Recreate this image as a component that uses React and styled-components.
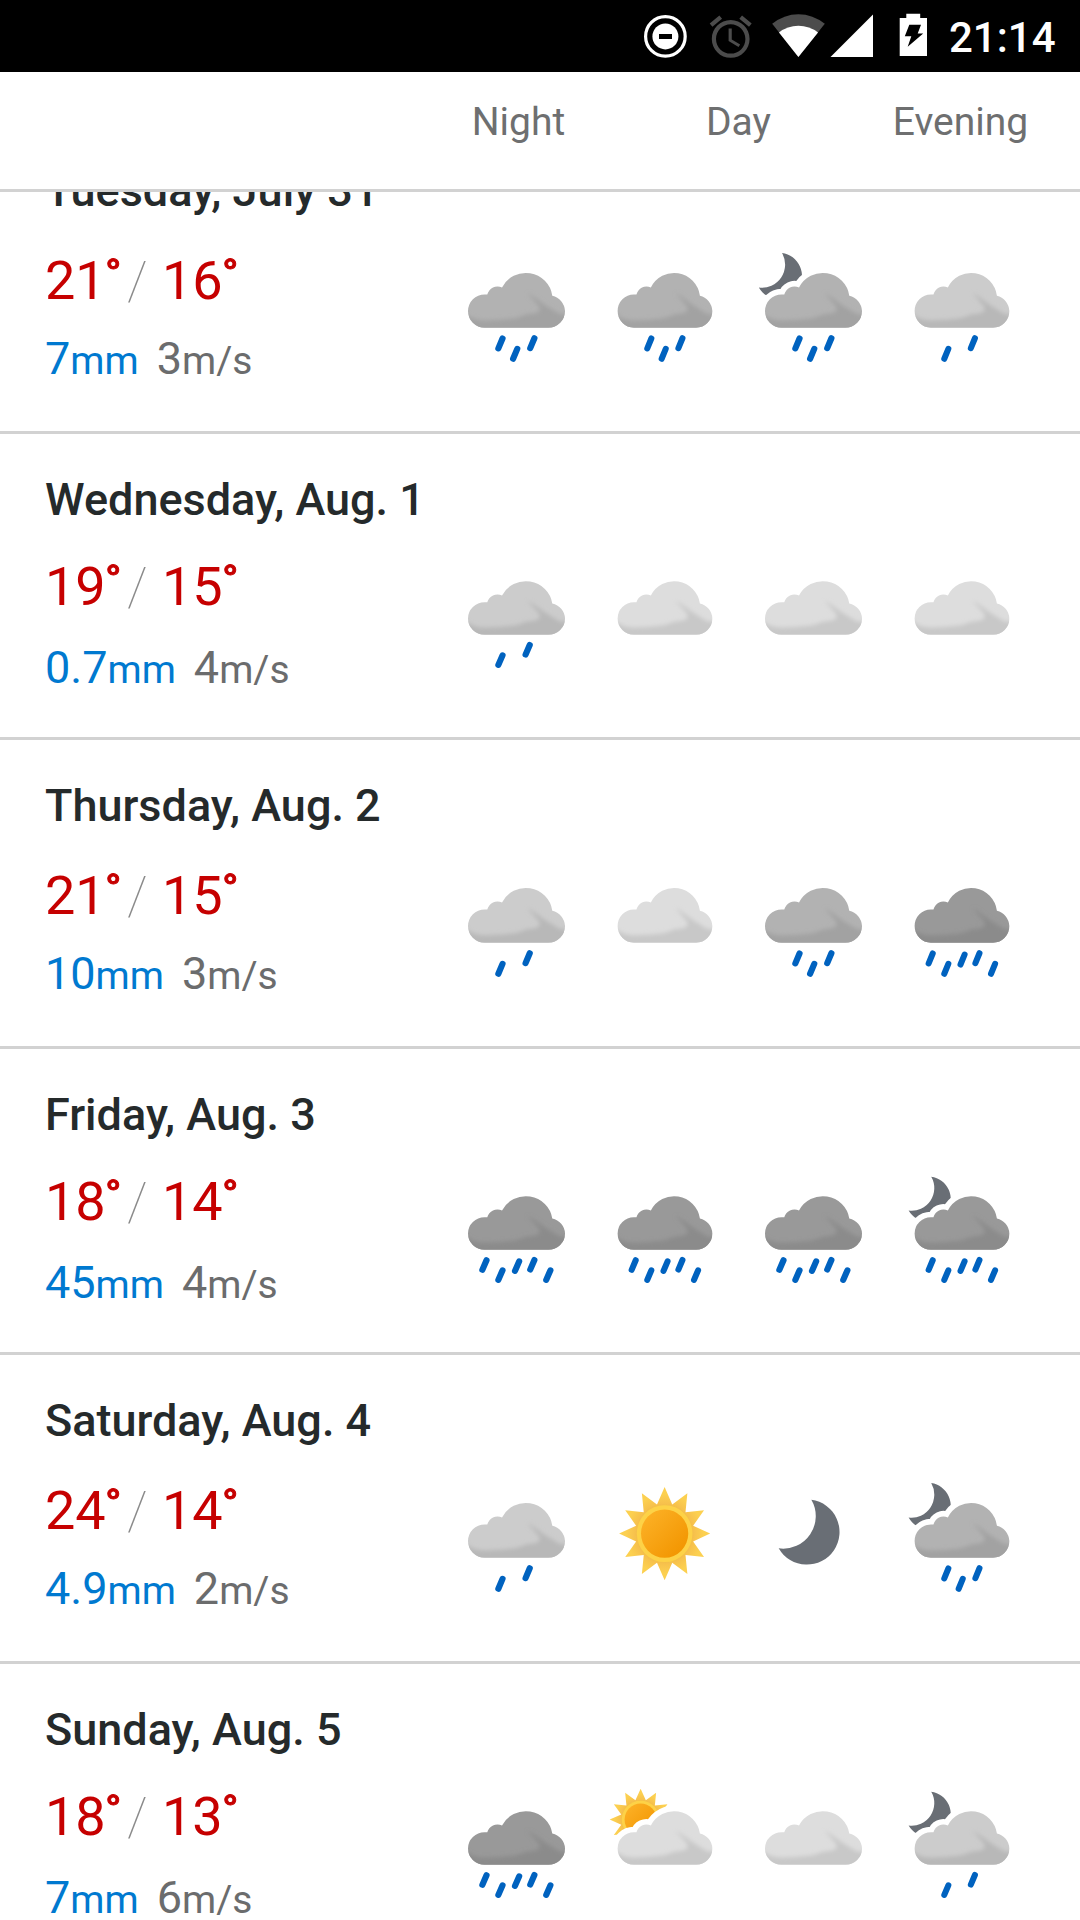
import React from 'react';
import styled, { createGlobalStyle } from 'styled-components';

const GlobalStyle = createGlobalStyle`
  html, body { margin: 0; padding: 0; background: #fff; }
  * { box-sizing: border-box; }
`;

const Screen = styled.div`
  display: flex;
  flex-direction: column;
  width: 1080px;
  height: 1920px;
  overflow: hidden;
  background: #fff;
  font-family: Roboto, "Liberation Sans", sans-serif;
`;

const StatusBar = styled.div`
  display: flex;
  align-items: center;
  flex: none;
  height: 72px;
  padding-left: 643px;
  background: #000;
`;

const StatusIcon = styled.svg`
  flex: none;
  display: block;
  width: ${(p) => p.$width}px;
  height: 72px;
  margin-right: ${(p) => p.$gap}px;
`;

const Clock = styled.span`
  color: #fff;
  font-size: 42px;
  font-weight: 500;
  line-height: 48px;
  padding-top: 4px;
`;

const PeriodHeader = styled.div`
  display: grid;
  grid-template-columns: 149px 291px 153px;
  flex: none;
  height: 120px;
  padding: 25px 0 0 444px;
  border-bottom: 3px solid #d2d2d2;
`;

const Period = styled.span`
  color: #6e6f70;
  font-size: 39px;
  line-height: 50px;
  text-align: center;
`;

const DayList = styled.div`
  flex: 1;
  min-height: 0;
  overflow: hidden;
`;

const DayRow = styled.div`
  display: flex;
  height: ${(p) => (p.$tall ? 309 : 306)}px;
  padding-left: 45px;
  border-bottom: 3px solid #d2d2d2;

  &:first-child {
    margin-top: -67px;
  }
`;

const DayInfo = styled.div`
  width: 408px;
  padding-top: 39px;
`;

const DayTitle = styled.div`
  color: #252a2b;
  font-size: 45px;
  font-weight: 500;
  line-height: 54px;
  white-space: nowrap;
`;

const Temperatures = styled.div`
  display: flex;
  margin: ${(p) => (p.$tall ? '33px 0 21px' : '30px 0 24px')};
  color: #c60000;
  font-size: 54px;
  line-height: 60px;
`;

const Temperature = styled.span`
  display: flex;
  width: 80px;
`;

const Degree = styled.span`
  margin-left: -1px;
  font-size: 51px;
  font-weight: 700;
  -webkit-text-stroke: 1px #c60000;
`;

const Slash = styled.span`
  width: 37px;
  padding-left: 3px;
  color: #8a8a8a;
  font-weight: 100;
  margin-left: -1px;
  margin-right: 1px;
`;

const Measures = styled.div`
  display: flex;
  gap: 18px;
  font-size: 45px;
  line-height: 54px;
`;

const Measure = styled.span`
  color: ${(p) => (p.$rain ? '#0079d0' : '#6b6c6d')};
`;

const Unit = styled.span`
  font-size: 39px;
`;

const Symbols = styled.div`
  display: grid;
  grid-template-columns: 126px 123px 126px 123px;
  grid-template-rows: ${(p) => (p.$tall ? 126 : 123)}px;
  column-gap: 24px;
  margin-top: 117px;
`;

const SymbolArt = styled.svg`
  display: block;
  width: 100%;
  height: 100%;
  overflow: visible;
`;

const CLOUD =
  'M25.1 68A13.2 13.2 0 0 1 25.1 41.6L27.2 41.7A8.3 8.3 0 0 1 38.9 36.2A21.2 21.2 0 0 1 78.8 42.6A13.2 13.2 0 0 1 88.9 54.8A13.2 13.2 0 0 1 75.7 68Z';
const SHADE =
  'M8 55C13.5 61 20 62.4 28 62.2C34 62 39 61.8 44 61C51 61 54 58.8 58.5 57.4C64 56.8 68.5 56.5 69 53.2C68.5 50 65.5 48.4 64 46C62.5 44 60.5 43 59.5 40.5C62.5 42.5 66 44.8 68.5 46.6C72 49.6 77 52.4 80.5 54.6C84 57 87 58.5 92 57L92 73L8 73Z';

const TONES = {
  heavy: ['#999999', '#8b8b8b'],
  medium: ['#b2b2b2', '#a2a2a2'],
  light: ['#cccccc', '#b8b8b8'],
  pale: ['#dddddd', '#c8c8c8'],
};

const DROPS = {
  heavy: [
    [23.3, 84.4], [36, 92.6], [49.2, 85.3], [61.3, 84.2], [74, 92.6],
  ],
  medium: [
    [36, 84.4], [47.7, 92.6], [61.3, 84.2],
  ],
  light: [
    [36, 92.6], [57.6, 84.2],
  ],
  pale: [],
};

const sunRays = Array.from({ length: 24 }, (_, i) => {
  const angle = (i * Math.PI) / 12;
  const radius = i % 2 ? 24 : 37;
  return `${(Math.sin(angle) * radius).toFixed(2)},${(-Math.cos(angle) * radius).toFixed(2)}`;
}).join(' ');

function Sun({ transform }) {
  return (
    <g transform={transform}>
      <polygon points={sunRays} fill="url(#rays)" />
      <circle r="23.4" fill="#f3c04a" opacity="0.6" />
      <circle r="22.6" fill="#fdd247" />
      <circle r="19.2" fill="url(#core)" />
    </g>
  );
}

function Moon({ transform }) {
  return (
    <path
      transform={transform}
      fill="#696e75"
      d="M48.7 21.95A25.9 25.9 0 1 1 22.75 60.6A25.9 25.9 0 0 0 48.7 21.95Z"
    />
  );
}

function Cloud({ tone }) {
  const [base, shade] = TONES[tone];
  return (
    <g>
      <path d={CLOUD} fill={base} />
      <g clipPath="url(#cloudClip)">
        <path d={SHADE} fill={shade} filter="url(#soften)" />
      </g>
      {DROPS[tone].map(([x, y]) => (
        <path
          key={x}
          d={`M${x} ${y}l3.3 -7.8`}
          stroke="#0062bf"
          strokeWidth="4.9"
          strokeLinecap="round"
        />
      ))}
    </g>
  );
}

function WeatherSymbol({ kind }) {
  const [sky, tone] = kind.split('-');
  return (
    <SymbolArt viewBox="0 0 100 100" preserveAspectRatio="none">
      {sky === 'sun' && (
        <Sun transform={tone ? 'translate(30.6 31.4) scale(0.68)' : 'translate(50.1 48.9)'} />
      )}
      {sky === 'moon' && (
        <Moon transform={tone ? 'translate(-9.13 -6.86) scale(0.709)' : undefined} />
      )}
      {tone && sky !== 'cloud' && <path d={CLOUD} fill="#fff" stroke="#fff" strokeWidth="9" />}
      {tone && <Cloud tone={tone} />}
    </SymbolArt>
  );
}

const SharedDefs = styled.svg`
  position: absolute;
  width: 0;
  height: 0;
`;

function SymbolDefs() {
  return (
    <SharedDefs aria-hidden="true">
      <defs>
        <linearGradient id="core" x1="0" y1="0" x2="1" y2="1">
          <stop offset="0.1" stopColor="#fcb025" />
          <stop offset="0.9" stopColor="#f29500" />
        </linearGradient>
        <radialGradient id="rays" gradientUnits="userSpaceOnUse" cx="0" cy="0" r="37">
          <stop offset="0.62" stopColor="#f6bf4c" />
          <stop offset="0.85" stopColor="#fcd050" />
        </radialGradient>
        <clipPath id="cloudClip">
          <path d={CLOUD} />
        </clipPath>
        <filter id="soften" x="-10%" y="-30%" width="120%" height="160%">
          <feGaussianBlur stdDeviation="1.6" />
        </filter>
      </defs>
    </SharedDefs>
  );
}

const days = [
  { title: 'Tuesday, July 31', high: 21, low: 16, rain: '7', wind: 3, symbols: ['cloud-medium', 'cloud-medium', 'moon-medium', 'cloud-light'] },
  { title: 'Wednesday, Aug. 1', high: 19, low: 15, rain: '0.7', wind: 4, symbols: ['cloud-light', 'cloud-pale', 'cloud-pale', 'cloud-pale'] },
  { title: 'Thursday, Aug. 2', high: 21, low: 15, rain: '10', wind: 3, symbols: ['cloud-light', 'cloud-pale', 'cloud-medium', 'cloud-heavy'] },
  { title: 'Friday, Aug. 3', high: 18, low: 14, rain: '45', wind: 4, symbols: ['cloud-heavy', 'cloud-heavy', 'cloud-heavy', 'moon-heavy'] },
  { title: 'Saturday, Aug. 4', high: 24, low: 14, rain: '4.9', wind: 2, symbols: ['cloud-light', 'sun', 'moon', 'moon-medium'] },
  { title: 'Sunday, Aug. 5', high: 18, low: 13, rain: '7', wind: 6, symbols: ['cloud-heavy', 'sun-pale', 'cloud-pale', 'moon-light'] },
];

function Day({ day, tall }) {
  return (
    <DayRow $tall={tall}>
      <DayInfo>
        <DayTitle>{day.title}</DayTitle>
        <Temperatures $tall={tall}>
          <Temperature>{day.high}<Degree>˚</Degree></Temperature>
          <Slash>/</Slash>
          <Temperature>{day.low}<Degree>˚</Degree></Temperature>
        </Temperatures>
        <Measures>
          <Measure $rain>{day.rain}<Unit>mm</Unit></Measure>
          <Measure>{day.wind}<Unit>m/s</Unit></Measure>
        </Measures>
      </DayInfo>
      <Symbols $tall={tall}>
        {day.symbols.map((kind, i) => (
          <WeatherSymbol key={i} kind={kind} />
        ))}
      </Symbols>
    </DayRow>
  );
}

export default function App() {
  return (
    <Screen>
      <GlobalStyle />
      <SymbolDefs />
      <StatusBar>
        <StatusIcon $width={45} $gap={17} viewBox="643 0 45 72">
          <circle cx="665.4" cy="36.4" r="19.8" fill="none" stroke="#fff" strokeWidth="3.2" />
          <circle cx="665.4" cy="36.4" r="13" fill="#fff" />
          <rect x="659" y="34" width="13" height="5" fill="#000" />
        </StatusIcon>
        <StatusIcon $width={51} $gap={15} viewBox="705 0 51 72">
          <path
            transform="translate(705.5 11.6) scale(2.1)"
            fill="#4c4c4c"
            d="M22 5.72l-4.6-3.86-1.29 1.53 4.6 3.86L22 5.72zM7.88 3.39L6.6 1.86 2 5.71l1.29 1.53 4.59-3.85zM12.5 8H11v6l4.75 2.85.75-1.23-4-2.37V8zM12 4c-4.97 0-9 4.03-9 9s4.02 9 9 9c4.97 0 9-4.03 9-9s-4.03-9-9-9zm0 16c-3.87 0-7-3.13-7-7s3.13-7 7-7 7 3.13 7 7-3.13 7-7 7z"
          />
        </StatusIcon>
        <StatusIcon $width={54} $gap={5} viewBox="771 0 54 72">
          <path d="M798.4 57L772.2 23.8Q784 14.2 798.4 14.2T824.8 23.8Z" fill="#4c4c4c" />
          <path d="M798.4 57L779 32.4Q787.5 25.7 798.4 25.7T818 32.4Z" fill="#fff" />
        </StatusIcon>
        <StatusIcon $width={44} $gap={25} viewBox="830 0 44 72">
          <path d="M830.5 57L873 14.5V57Z" fill="#fff" />
        </StatusIcon>
        <StatusIcon $width={29} $gap={21} viewBox="899 0 29 72">
          <path d="M899.7 18H906.3V13.8H920.2V18H927V56H899.7Z" fill="#fff" />
          <path d="M909.3 24.7H921L917.7 33.4H923.2L907.7 46.8L911.3 36.2H904.8Z" fill="#000" />
        </StatusIcon>
        <Clock>21:14</Clock>
      </StatusBar>
      <PeriodHeader>
        <Period>Night</Period>
        <Period>Day</Period>
        <Period>Evening</Period>
      </PeriodHeader>
      <DayList>
        {days.map((day, i) => (
          <Day key={day.title} day={day} tall={i % 2 === 0} />
        ))}
      </DayList>
    </Screen>
  );
}
